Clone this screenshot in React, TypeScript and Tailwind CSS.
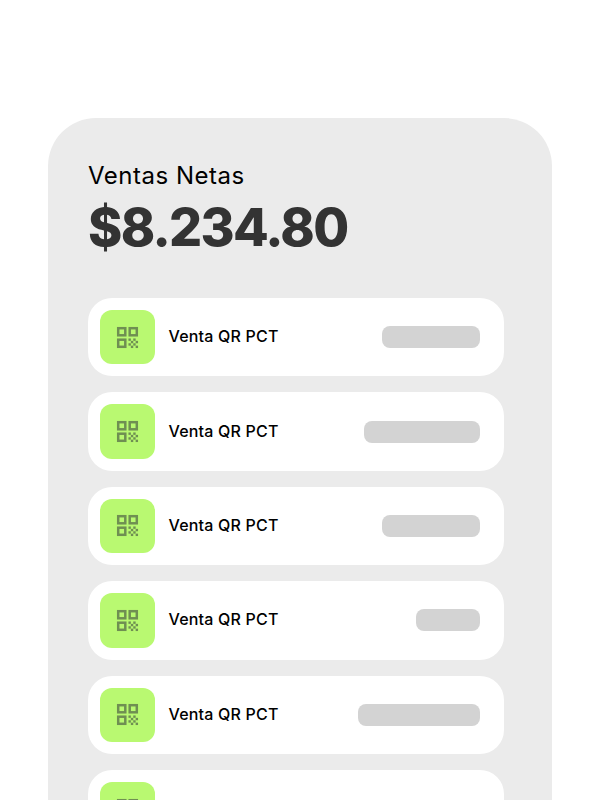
const rows = [
  { barWidth: "w-[98px]", visible: true },
  { barWidth: "w-[116px]", visible: true },
  { barWidth: "w-[98px]", visible: true },
  { barWidth: "w-[64px]", visible: true },
  { barWidth: "w-[122px]", visible: true },
  { barWidth: "", visible: false }, // cut by the fold, only the icon shows
];

function QrIcon() {
  return (
    <svg width="23" height="23" viewBox="0 0 24 24" fill="none" className="text-[#6f8f52]">
      <g stroke="currentColor" strokeWidth="2.6">
        <rect x="2.3" y="2.3" width="7.4" height="7.4" />
        <rect x="14.3" y="2.3" width="7.4" height="7.4" />
        <rect x="2.3" y="14.3" width="7.4" height="7.4" />
      </g>
      <g fill="currentColor">
        <rect x="13" y="13" width="2.5" height="2.5" />
        <rect x="18" y="13" width="2.5" height="2.5" />
        <rect x="15.5" y="15.5" width="2.5" height="2.5" />
        <rect x="20.5" y="15.5" width="2.5" height="2.5" />
        <rect x="13" y="18" width="2.5" height="2.5" />
        <rect x="18" y="18" width="2.5" height="2.5" />
        <rect x="15.5" y="20.5" width="2.5" height="2.5" />
        <rect x="20.5" y="20.5" width="2.5" height="2.5" />
      </g>
    </svg>
  );
}

function SaleRow({ barWidth, visible }: { barWidth: string; visible: boolean }) {
  return (
    <div className="flex h-[78.4px] shrink-0 items-center justify-between rounded-[24px] bg-white pl-3 pr-6">
      <div className="flex items-center gap-[13.5px]">
        <div className="flex h-[54.5px] w-[55px] items-center justify-center rounded-[12px] bg-[#b9f971]">
          <QrIcon />
        </div>
        {visible ? (
          <span className="-translate-y-px text-[16px] font-[550] tracking-[0.2px] text-black">Venta QR PCT</span>
        ) : null}
      </div>
      {visible ? <div className={`h-[22px] rounded-[8px] bg-[#d3d3d3] ${barWidth}`} /> : null}
    </div>
  );
}

export default function App() {
  return (
    <div className="h-[800px] overflow-hidden bg-white px-12 pt-[118px] font-['Inter',sans-serif]">
      <div className="h-[720px] rounded-t-[48px] bg-[#ebebeb] pl-10 pr-12 pt-[42px]">
        <p className="text-[24px] leading-[32px] tracking-[0.5px] text-black">Ventas Netas</p>
        <p className="mt-[6px] text-[52px] font-extrabold leading-[60px] tracking-[-1.7px] text-[#333333]">$8.234.80</p>
        <div className="mt-[40px] flex flex-col gap-4">
          {rows.map((row, index) => (
            <SaleRow key={index} barWidth={row.barWidth} visible={row.visible} />
          ))}
        </div>
      </div>
    </div>
  );
}
